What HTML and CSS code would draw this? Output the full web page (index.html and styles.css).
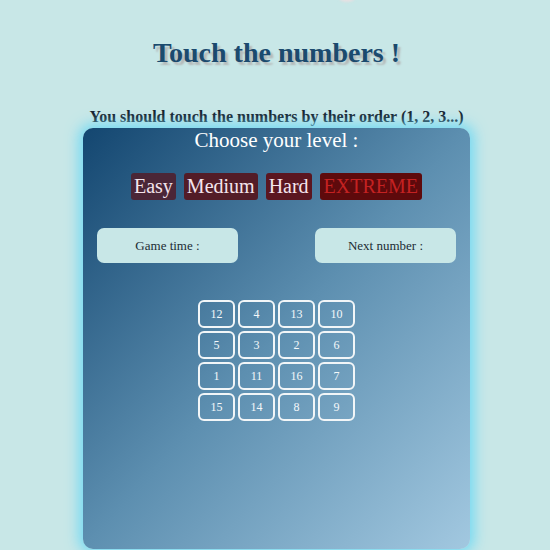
FILE: index.html
```html
<!DOCTYPE html>
<html lang="en">
<head>
<meta charset="utf-8">
<title>Touch the numbers</title>
<link rel="stylesheet" href="styles.css">
</head>
<body>
<div class="page">
  <span class="blob" aria-hidden="true"></span>
  <h1 class="title">Touch the numbers !</h1>
  <p class="subtitle">You should touch the numbers by their order (1, 2, 3...)</p>
  <main class="board">
    <h2 class="choose">Choose your level :</h2>
    <div class="levels">
      <span class="level easy">Easy</span>
      <span class="level medium">Medium</span>
      <span class="level hard">Hard</span>
      <span class="level extreme">EXTREME</span>
    </div>
    <div class="infos">
      <div class="info">Game time :</div>
      <div class="info">Next number :</div>
    </div>
    <div class="grid">
      <div class="cell">12</div><div class="cell">4</div><div class="cell">13</div><div class="cell">10</div>
      <div class="cell">5</div><div class="cell">3</div><div class="cell">2</div><div class="cell">6</div>
      <div class="cell">1</div><div class="cell">11</div><div class="cell">16</div><div class="cell">7</div>
      <div class="cell">15</div><div class="cell">14</div><div class="cell">8</div><div class="cell">9</div>
    </div>
  </main>
</div>
</body>
</html>
```

FILE: styles.css
```css
* { box-sizing: border-box; }
html, body {
  margin: 0;
  padding: 0;
  height: 550px;
  overflow: hidden;
  background: #c8e7e7;
  font-family: "Liberation Serif", "Times New Roman", serif;
}
.page {
  position: relative;
  display: flex;
  flex-direction: column;
  align-items: center;
  padding-left: 3px;
}
.blob {
  position: absolute;
  top: -6px;
  left: 339px;
  width: 16px;
  height: 8px;
  border-radius: 50%;
  background: #e6e0e2;
  filter: blur(1px);
}
.title {
  margin: 37px 0 0;
  font-size: 28px;
  line-height: 32px;
  font-weight: bold;
  color: #1b4a6e;
  text-shadow: 3px 3px 2px #b4b8b8;
}
.subtitle {
  margin: 39px 0 0;
  font-size: 16px;
  line-height: 18px;
  font-weight: bold;
  color: #14202c;
}
.board {
  width: 387px;
  height: 421px;
  margin-top: 2px;
  border-radius: 10px;
  background: linear-gradient(to bottom right, #134670 0%, #5d8fb0 50%, #a2c8e0 100%);
  box-shadow: 0 0 14px 4px #72d9f3;
  padding: 0 14px;
  display: flex;
  flex-direction: column;
  align-items: center;
}
.choose {
  margin: 0;
  font-size: 21px;
  line-height: 25px;
  font-weight: normal;
  color: #ffffff;
}
.levels {
  display: flex;
  gap: 8px;
  margin-top: 20px;
}
.level {
  font-size: 20px;
  line-height: 27px;
  height: 27px;
  padding: 0 3px;
  border-radius: 3px;
  color: #f4e4ec;
}
.easy { background: #4b2637; }
.medium { background: #531c27; }
.hard { background: #5b1620; }
.extreme { background: #5e0a0c; color: #c42222; padding: 0 4px; }
.infos {
  align-self: stretch;
  display: flex;
  justify-content: space-between;
  margin-top: 28px;
}
.info {
  width: 141px;
  height: 35px;
  border-radius: 7px;
  background: #c8e7e7;
  color: #1c2c34;
  font-size: 13px;
  display: flex;
  align-items: center;
  justify-content: center;
}
.grid {
  display: grid;
  grid-template-columns: repeat(4, 37px);
  grid-auto-rows: 28px;
  gap: 3px;
  margin-top: 37px;
}
.cell {
  border: 2px solid #f2f6f8;
  border-radius: 6px;
  color: #f4f8fa;
  font-size: 12px;
  display: flex;
  align-items: center;
  justify-content: center;
}
```
